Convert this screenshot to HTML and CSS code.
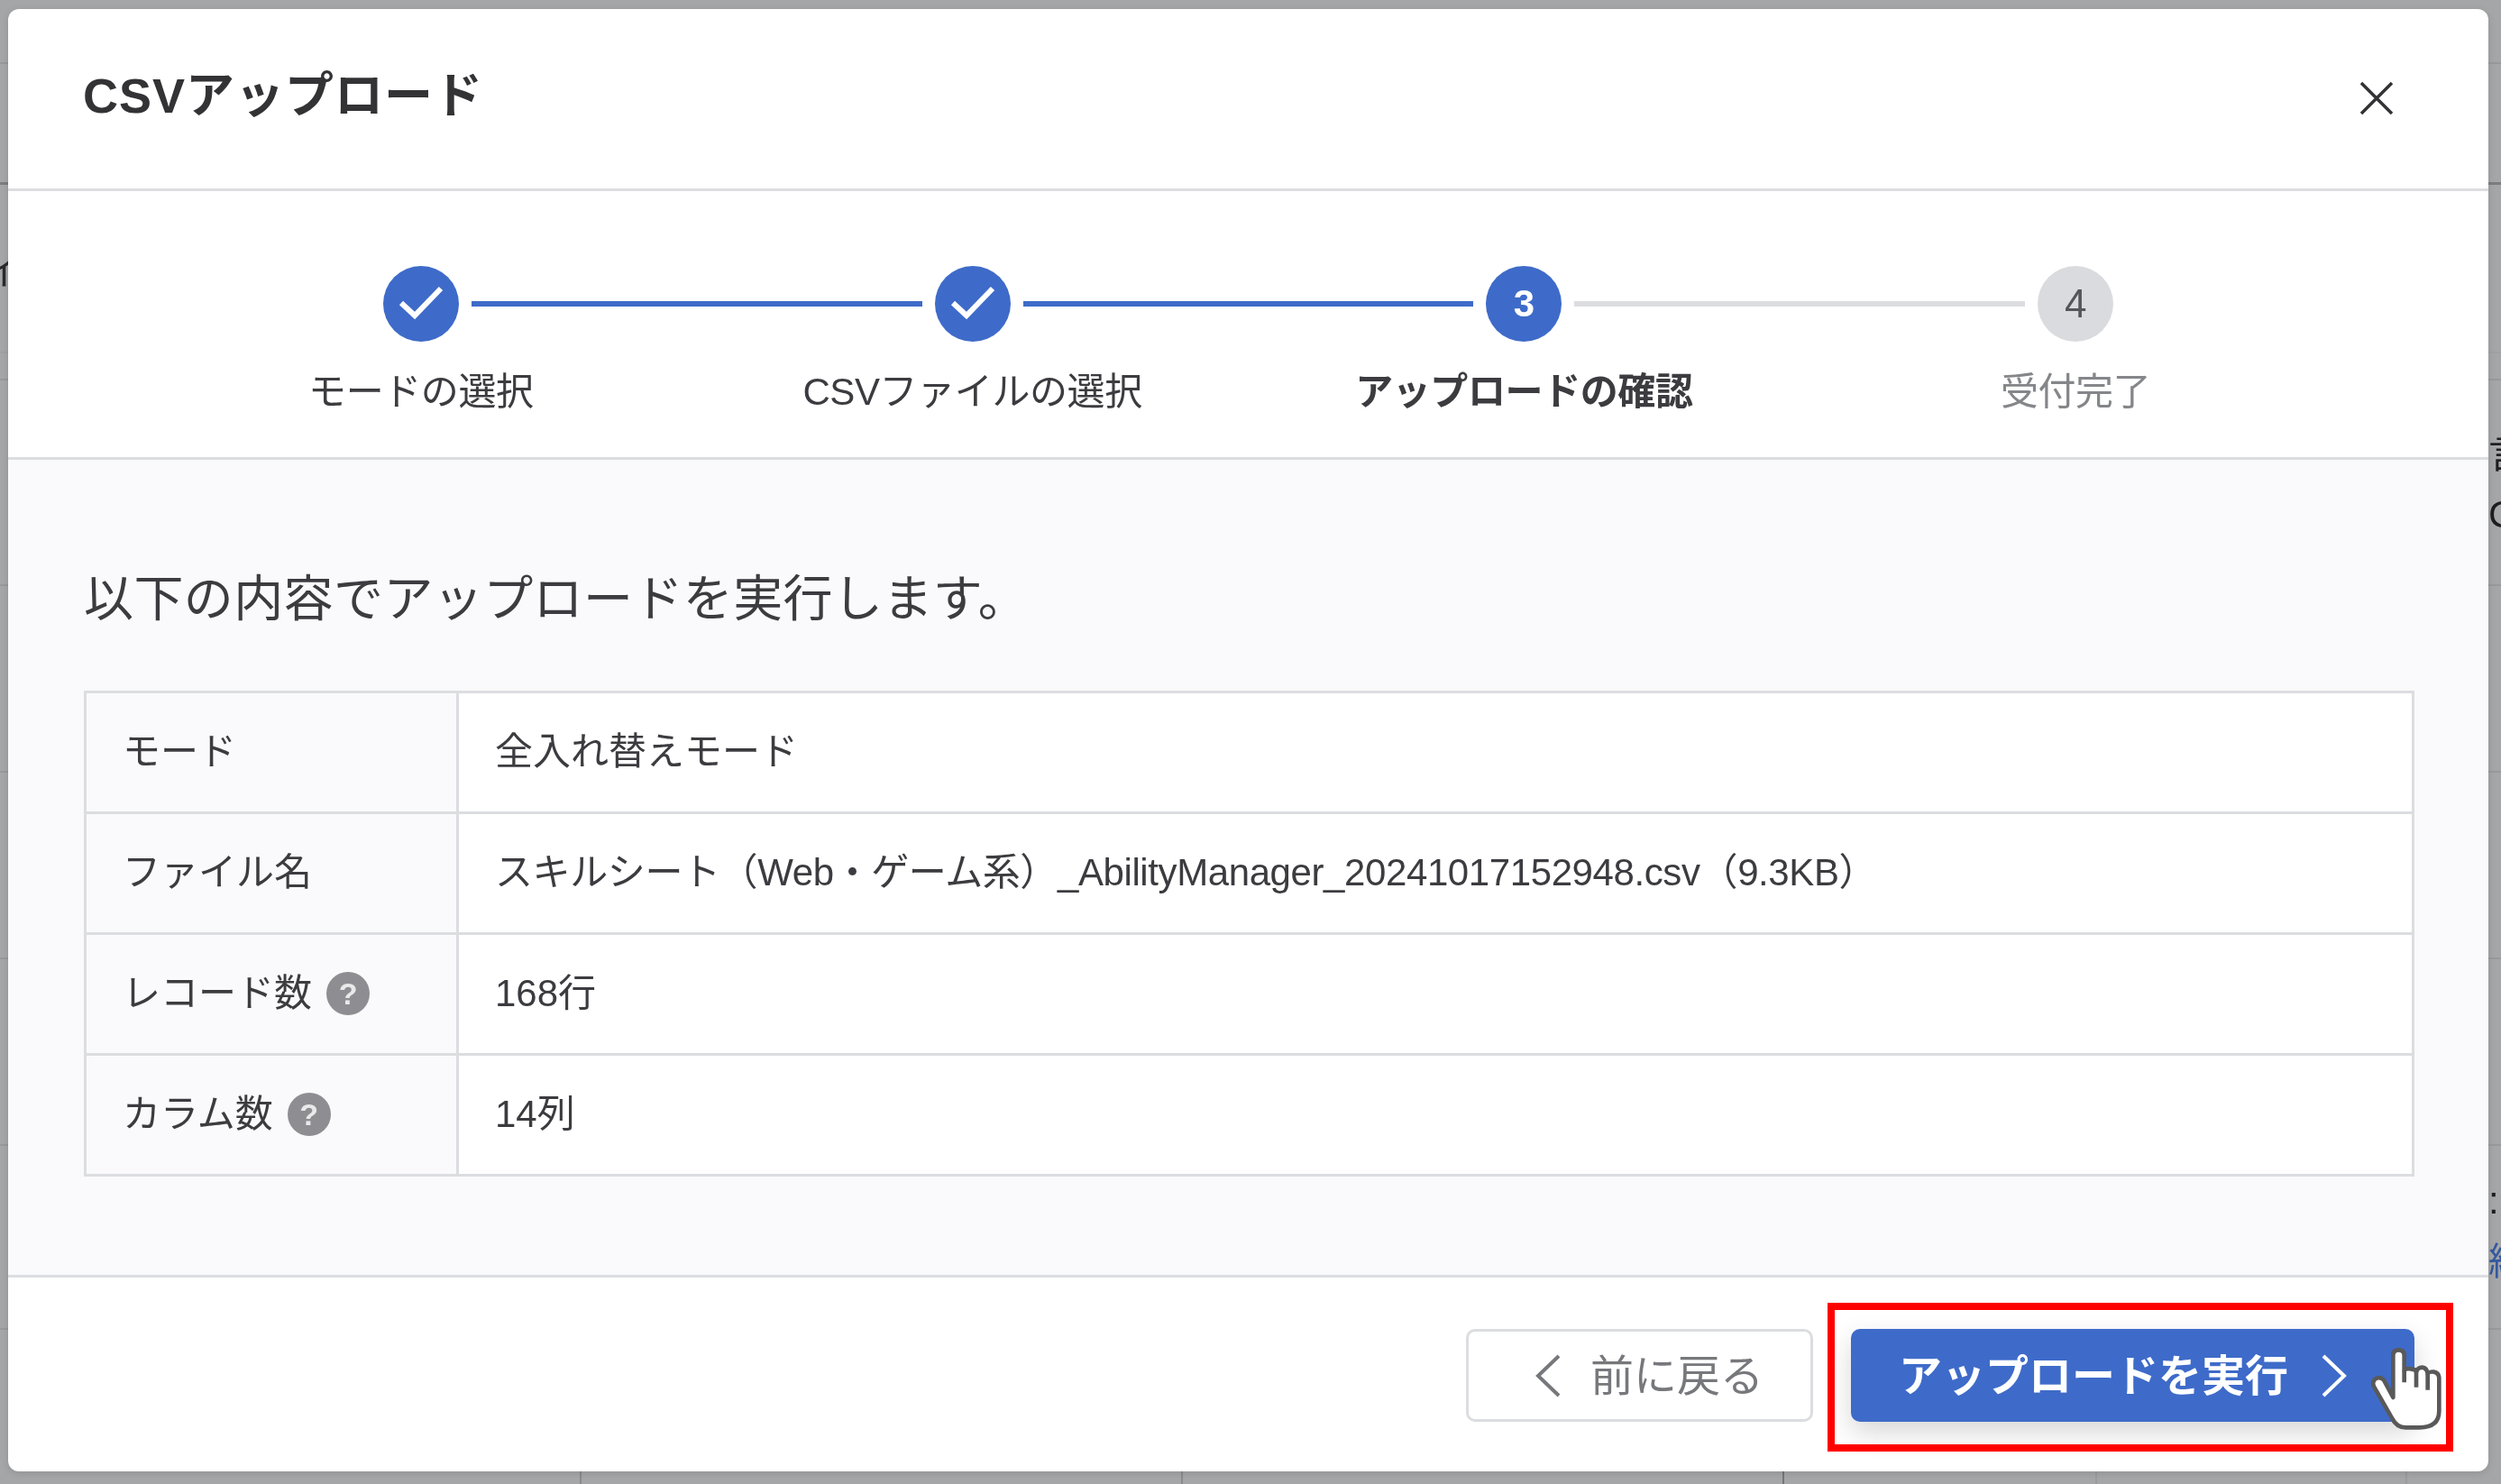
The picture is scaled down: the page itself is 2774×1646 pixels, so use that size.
FILE: index.html
```html
<!DOCTYPE html>
<html lang="ja">
<head>
<meta charset="utf-8">
<title>CSVアップロード</title>
<link rel="stylesheet" href="styles.css">
</head>
<body>
<div class="page">
  <div class="backdrop">
    <div class="bg-row"></div>
    <div class="bg-row"></div>
    <div class="bg-row bg-left"><span class="frag-left">イ</span></div>
    <div class="bg-row"></div>
    <div class="bg-row bg-right"><span class="frag">言</span><span class="frag">C</span></div>
    <div class="bg-row"></div>
    <div class="bg-row"></div>
    <div class="bg-row"></div>
    <div class="bg-row bg-right bg-right-low"><span class="frag">:</span><span class="frag frag-link">編</span></div>
    <div class="bg-cols"><span></span><span></span><span></span><span></span><span></span></div>
  </div>

  <section class="modal">
    <header class="modal-head">
      <h1 class="modal-title">CSVアップロード</h1>
      <svg class="close" viewBox="0 0 38 38"><path d="M2 2 36 36M36 2 2 36"/></svg>
    </header>

    <ol class="steps">
      <li class="step done">
        <div class="rail">
          <span class="line none"></span>
          <span class="dot"><svg class="check" viewBox="0 0 50 40"><path d="M3 19 18 33 47 3"/></svg></span>
          <span class="line on"></span>
        </div>
        <span class="step-label">モードの選択</span>
      </li>
      <li class="step done">
        <div class="rail">
          <span class="line on"></span>
          <span class="dot"><svg class="check" viewBox="0 0 50 40"><path d="M3 19 18 33 47 3"/></svg></span>
          <span class="line on"></span>
        </div>
        <span class="step-label">CSVファイルの選択</span>
      </li>
      <li class="step current">
        <div class="rail">
          <span class="line on"></span>
          <span class="dot">3</span>
          <span class="line"></span>
        </div>
        <span class="step-label">アップロードの確認</span>
      </li>
      <li class="step todo">
        <div class="rail">
          <span class="line"></span>
          <span class="dot">4</span>
          <span class="line none"></span>
        </div>
        <span class="step-label">受付完了</span>
      </li>
    </ol>

    <div class="modal-body">
      <p class="lead">以下の内容でアップロードを実行します。</p>
      <table class="summary">
        <tr><th>モード</th><td>全入れ替えモード</td></tr>
        <tr><th>ファイル名</th><td class="fname">スキルシート（Web・ゲーム系）_AbilityManager_20241017152948.csv（9.3KB）</td></tr>
        <tr><th><div class="th-flex">レコード数<span class="help">?</span></div></th><td>168行</td></tr>
        <tr><th><div class="th-flex">カラム数<span class="help">?</span></div></th><td>14列</td></tr>
      </table>
    </div>

    <footer class="modal-foot">
      <button class="btn btn-back" type="button">
        <svg class="chev" viewBox="0 0 28 48"><path d="M26 2 3 24 26 46"/></svg>
        <span class="btn-text">前に戻る</span>
      </button>
      <button class="btn btn-run" type="button">
        <span class="btn-text">アップロードを実行</span>
        <svg class="chev" viewBox="0 0 28 48"><path d="M2 2 25 24 2 46"/></svg>
      </button>
    </footer>
  </section>

  <div class="callout"></div>
  <svg class="hand" viewBox="0 0 522 540">
    <path d="M163 330V190Q163 172 181 172Q200 172 200 190V240Q205 232 220 235Q237 235 240 245Q245 230 260 230Q275 232 278 250Q285 243 298 245Q315 248 316 265V375Q316 430 250 430H205Q175 430 160 400L100 295Q92 280 102 270Q118 258 132 272Z"/>
    <path d="M200 240V280M240 245V296M278 250V305"/>
  </svg>
</div>
</body>
</html>
```

FILE: styles.css
```css
* { box-sizing: border-box; }
html, body { margin: 0; padding: 0; }
body {
  width: 2774px;
  height: 1646px;
  overflow: hidden;
  font-family: "Liberation Sans", "Noto Sans CJK JP", sans-serif;
  color: #3c3c40;
}
.page {
  position: relative;
  width: 2774px;
  height: 1646px;
  background: #a5a6a8;
  overflow: hidden;
  filter: blur(0.7px);
}

/* dimmed page behind the dialog */
.backdrop { height: 1646px; display: flex; flex-direction: column; overflow: hidden; }
.bg-row { flex: none; border-bottom: 2px solid #98999b; overflow: hidden; }
.bg-row:nth-child(1) { height: 71px; }
.bg-row:nth-child(2) { height: 134px; border-bottom: 3px solid #7c7d80; }
.bg-row:nth-child(3) { height: 187px; border-bottom-color: #a0a1a3; }
.bg-row:nth-child(4) { height: 30px; }
.bg-row:nth-child(5) { height: 228px; }
.bg-row:nth-child(6),
.bg-row:nth-child(7),
.bg-row:nth-child(8) { height: 207px; }
.bg-row:nth-child(9) { height: 204px; }
.bg-left { padding-top: 72px; }
.frag-left {
  display: block;
  width: 9px;
  overflow: hidden;
  font-size: 41px;
  line-height: 50px;
  text-indent: -18px;
  color: #2a2a2c;
}
.bg-right { display: flex; flex-direction: column; padding: 58px 0 0 2760px; gap: 16px; }
.bg-right-low { padding-top: 36px; gap: 18px; }
.frag {
  display: block;
  width: 14px;
  overflow: hidden;
  font-size: 42px;
  line-height: 50px;
  color: #1e1e20;
}
.frag-link { color: #33589f; }
.bg-cols { flex: 1; display: flex; }
.bg-cols span { flex: none; border-right: 2px solid #8a8b8e; }
.bg-cols span:nth-child(1) { width: 645px; }
.bg-cols span:nth-child(2) { width: 667px; }
.bg-cols span:nth-child(3) { width: 667px; border-right-color: #76777a; }
.bg-cols span:nth-child(4) { width: 347px; border-right-color: #9b9c9e; }
.bg-cols span:nth-child(5) { width: 344px; border-right-color: #9b9c9e; }

/* dialog */
.modal {
  position: absolute;
  left: 9px;
  top: 10px;
  width: 2751px;
  height: 1622px;
  display: flex;
  flex-direction: column;
  background: #fff;
  border-radius: 12px;
  overflow: hidden;
  box-shadow: 0 2px 8px rgba(0, 0, 0, 0.12);
}
.modal-head {
  height: 202px;
  flex: none;
  display: flex;
  align-items: flex-start;
  justify-content: space-between;
  padding: 66px 105px 0 83px;
  border-bottom: 3px solid #dcdde0;
}
.modal-title {
  margin: 0;
  font-size: 54px;
  line-height: 60px;
  font-weight: 700;
  letter-spacing: 1px;
  color: #333336;
}
.close {
  width: 38px;
  height: 38px;
  margin-top: 14px;
  fill: none;
  stroke: #333336;
  stroke-width: 3.5;
}

/* stepper */
.steps {
  height: 298px;
  flex: none;
  margin: 0;
  padding: 83px 152px 0;
  list-style: none;
  display: grid;
  grid-template-columns: repeat(4, 1fr);
  align-content: start;
  border-bottom: 3px solid #dcdde0;
}
.step {
  display: flex;
  flex-direction: column;
  align-items: center;
  gap: 31px;
}
.rail {
  width: 100%;
  display: flex;
  align-items: center;
  gap: 14px;
}
.line { flex: 1; height: 6px; background: #dcdde0; }
.line.on { background: #3e6bc9; }
.line.none { background: transparent; }
.dot {
  width: 84px;
  height: 84px;
  flex: none;
  border-radius: 50%;
  background: #3e6bc9;
  color: #fff;
  display: flex;
  align-items: center;
  justify-content: center;
  font-size: 42px;
  font-weight: 700;
}
.todo .dot { background: #dadbde; color: #55565a; font-weight: 400; font-size: 44px; }
.check {
  width: 50px;
  height: 40px;
  fill: none;
  stroke: #fff;
  stroke-width: 6;
}
.step-label { font-size: 42px; line-height: 50px; letter-spacing: -0.4px; color: #3c3c40; white-space: nowrap; }
.current .step-label { font-weight: 700; }
.todo .step-label { color: #85868a; }

/* body */
.modal-body {
  flex: 1;
  background: #fafafc;
  padding: 120px 84px 0;
  border-bottom: 3px solid #dcdde0;
}
.lead {
  margin: 0 0 68px;
  font-size: 55px;
  line-height: 68px;
  letter-spacing: 0.4px;
  color: #3c3c40;
}
.summary {
  width: 2585px;
  border-collapse: collapse;
  table-layout: fixed;
  font-size: 42px;
}
.summary th, .summary td {
  height: 134px;
  padding: 0 0 2px 40px;
  border: 3px solid #dcdde0;
  font-weight: 400;
  text-align: left;
  line-height: 50px;
}
.summary th { width: 413px; background: #fafafc; }
.summary td { background: #fff; }
.summary .fname { letter-spacing: -0.4px; }
.th-flex { display: flex; align-items: center; gap: 16px; }
.help {
  display: flex;
  align-items: center;
  justify-content: center;
  width: 48px;
  height: 48px;
  border-radius: 50%;
  background: #8e8e92;
  color: #e9e9ea;
  font-size: 34px;
  font-weight: 700;
  line-height: 48px;
}

/* footer */
.modal-foot {
  height: 215px;
  flex: none;
  display: flex;
  justify-content: flex-end;
  gap: 42px;
  padding: 57px 82px 0 0;
}
.btn {
  height: 103px;
  display: flex;
  align-items: center;
  border-radius: 10px;
  font-family: inherit;
  font-size: 48px;
  white-space: nowrap;
}
.btn-text { padding-bottom: 8px; }
.chev { width: 28px; height: 48px; fill: none; stroke-width: 4; flex: none; }
.btn-back {
  width: 385px;
  padding: 0 0 0 74px;
  gap: 33px;
  background: #fff;
  border: 3px solid #dcdde0;
  color: #77787c;
}
.btn-back .chev { stroke: #77787c; }
.btn-run {
  width: 625px;
  padding: 0 0 0 53px;
  gap: 37px;
  background: #3e6bc9;
  border: 0;
  color: #fff;
  font-weight: 700;
  box-shadow: 0 12px 30px rgba(0, 0, 0, 0.16);
}
.btn-run .chev { stroke: #fff; }

/* annotation drawn over the screenshot */
.callout {
  position: absolute;
  left: 2027px;
  top: 1445px;
  width: 694px;
  height: 165px;
  border: 8px solid #f00;
}
.hand {
  position: absolute;
  left: 2600px;
  top: 1440px;
  width: 174px;
  height: 180px;
  fill: #fff;
  stroke: #595959;
  stroke-width: 14;
  stroke-linejoin: round;
}
```
